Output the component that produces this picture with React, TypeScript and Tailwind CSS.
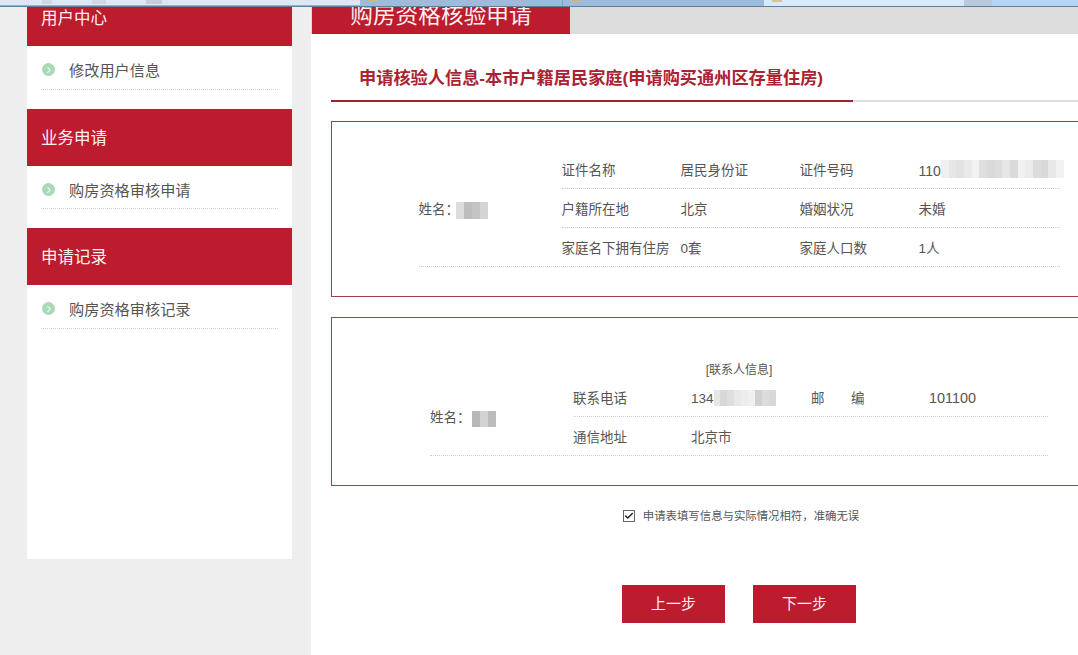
import { Check, ChevronRight } from "lucide-react";

const sideGroups = [
  { title: "用户中心", item: "修改用户信息", size: "h-[44px] mb-[19px]" },
  { title: "业务申请", item: "购房资格审核申请", size: "h-[43px] mb-[19px]" },
  { title: "申请记录", item: "购房资格审核记录", size: "h-[44px]" },
];

const idMosaic = [
  "bg-[#efefef]", "bg-[#e6e6e6]", "bg-[#e2e2e2]", "bg-[#e9e9e9]", "bg-[#f2f2f2]", "bg-[#dedede]",
  "bg-[#d9d9d9]", "bg-[#dcdcdc]", "bg-[#e6e6e6]", "bg-[#dadada]", "bg-[#f0f0f0]", "bg-[#ebebeb]",
  "bg-[#dcdcdc]", "bg-[#d8d8d8]", "bg-[#e8e8e8]", "bg-[#f2f2f2]",
];
const phoneMosaic = [
  "bg-[#e6e6e6]", "bg-[#d8d8d8]", "bg-[#dedede]", "bg-[#e8e8e8]", "bg-[#ececec]",
  "bg-[#f0f0f0]", "bg-[#d0d0d0]", "bg-[#dcdcdc]", "bg-[#d8d8d8]",
];
const name1Mosaic = ["bg-[#dcdcdc]", "bg-[#bdbdbd]", "bg-[#c4c4c4]", "bg-[#d4d4d4]"];
const name2Mosaic = ["bg-[#b8b8b8]", "bg-[#d2d2d2]", "bg-[#bcbcbc]"];

function Mosaic({ cells, className }: { cells: string[]; className: string }) {
  return (
    <span className={`flex shrink-0 ${className}`}>
      {cells.map((c, i) => (
        <span key={i} className={`h-full flex-1 ${c}`} />
      ))}
    </span>
  );
}

function SideGroup({ title, item, size }: { title: string; item: string; size: string }) {
  return (
    <div>
      <div className="flex h-[57px] items-center bg-[#bc1c2e] px-[14px] pt-[1px] text-[16.5px] text-[#fdf0f0]">{title}</div>
      <div className={`mx-[14px] flex border-b border-dotted border-[#d4d4d4] pt-[17px] ${size}`}>
        <span className="ml-px flex size-[13px] items-center justify-center rounded-full bg-[#a9d9b6]">
          <ChevronRight size={10} strokeWidth={3} className="text-[#e4f4e8]" />
        </span>
        <span className="ml-[14px] -mt-[2px] text-[15.2px] leading-[20px] text-[#555]">{item}</span>
      </div>
    </div>
  );
}

export default function App() {
  return (
    <div
      className="h-[655px] w-[1078px] overflow-hidden bg-[#eeeeee]"
      style={{ fontFamily: '"Liberation Sans", "Noto Sans CJK SC", sans-serif' }}
    >
      {/* browser chrome peeking in at the top */}
      <div className="relative z-10 flex h-[7px] border-b border-[#5f7f98]">
        <div className="flex w-[360px] gap-[40px] border-b border-[#8fb4d8] bg-[#dbe8f4] pl-[42px]">
          <div className="h-[4px] w-[10px] bg-[#d0d8e0]" />
          <div className="h-[4px] w-[14px] bg-[#d0d8e0]" />
          <div className="h-[4px] w-[16px] bg-[#c4ced8]" />
        </div>
        <div className="w-[203px] border-r border-[#7f9fbf] bg-[#9dbcdc] pl-[8px]">
          <div className="h-[2px] w-[10px] bg-[#c9b98a]" />
        </div>
        <div className="w-[201px] bg-[#9dbcdc] pl-[8px]">
          <div className="h-[2px] w-[10px] bg-[#c9b98a]" />
        </div>
        <div className="w-[200px] bg-[#d8e9f8] pl-[8px]">
          <div className="h-[2px] w-[10px] bg-[#d9c48a]" />
        </div>
        <div className="w-[28px] bg-[#b9c9d9]" />
        <div className="flex-1 bg-[#b4d6f5]" />
      </div>

      <div className="flex">
        {/* sidebar */}
        <aside className="ml-[27px] -mt-[18px] h-[570px] w-[265px] shrink-0 bg-white">
          {sideGroups.map((g) => (
            <SideGroup key={g.title} title={g.title} item={g.item} size={g.size} />
          ))}
        </aside>

        {/* main column runs past the window edge */}
        <main className="ml-[19px] -mt-[13px] h-[661px] w-[856px] shrink-0 bg-white">
          <div className="h-[40px] bg-[#dcdcdc] pl-px">
            <div className="flex h-[40px] w-[258px] items-center justify-center bg-[#bc1c2e] pt-[2px] text-[22.7px] text-[#fdf0f0]">
              购房资格核验申请
            </div>
          </div>

          <div className="mx-5">
            <div className="mt-[31px] h-[37px] border-b-2 border-[#dddddd]">
              <div className="h-[37px] w-[522px] whitespace-nowrap border-b-2 border-[#a8202f] pl-[28px] pt-[1px] text-[17.2px] font-bold leading-[24px] text-[#ab2233]">
                申请核验人信息-本市户籍居民家庭(申请购买通州区存量住房)
              </div>
            </div>

            {/* applicant */}
            <section className="mt-[19px] border border-[#a83a4a] pb-[29px] pt-7 text-[13.5px] text-[#555]">
              <div className="mx-auto flex w-[641px] border-b border-dotted border-[#cccccc]">
                <div className="flex w-[143px] shrink-0 items-center pt-1">
                  姓名：
                  <Mosaic cells={name1Mosaic} className="h-[17px] w-[32px] -ml-[3px]" />
                </div>
                <div className="min-w-0 flex-1">
                  <div className="flex h-[39px] items-center border-b border-dotted border-[#cccccc] pt-1">
                    <span className="w-[119px] shrink-0">证件名称</span>
                    <span className="w-[119px] shrink-0">居民身份证</span>
                    <span className="w-[119px] shrink-0">证件号码</span>
                    <span className="flex shrink-0 items-center text-[14px]">
                      110
                      <Mosaic cells={idMosaic} className="-mt-1 h-[18px] w-[123px]" />
                    </span>
                  </div>
                  <div className="flex h-[39px] items-center border-b border-dotted border-[#cccccc] pt-1">
                    <span className="w-[119px]">户籍所在地</span>
                    <span className="w-[119px]">北京</span>
                    <span className="w-[119px]">婚姻状况</span>
                    <span>未婚</span>
                  </div>
                  <div className="flex h-[38px] items-center pt-1">
                    <span className="w-[119px]">家庭名下拥有住房</span>
                    <span className="w-[119px]">0套</span>
                    <span className="w-[119px]">家庭人口数</span>
                    <span>1人</span>
                  </div>
                </div>
              </div>
            </section>

            {/* contact */}
            <section className="mt-[20px] border border-[#a83a4a] pb-[29px] pt-[42px] text-[13.5px] text-[#555]">
              <div className="h-[18px] pt-px text-center text-[12px] leading-[18px]">[联系人信息]</div>
              <div className="mx-auto flex w-[618px] border-b border-dotted border-[#cccccc]">
                <div className="flex w-[143px] shrink-0 items-center pt-1">
                  姓名：
                  <Mosaic cells={name2Mosaic} className="h-[16px] w-[24px] ml-[1px]" />
                </div>
                <div className="min-w-0 flex-1">
                  <div className="flex h-[39px] items-center border-b border-dotted border-[#cccccc] pt-1">
                    <span className="w-[118px]">联系电话</span>
                    <span className="flex w-[120px] items-center">
                      134
                      <Mosaic cells={phoneMosaic} className="-mt-[2px] h-[16px] w-[62px]" />
                    </span>
                    <span className="flex w-[118px]">
                      <span className="w-[40px]">邮</span>
                      <span>编</span>
                    </span>
                    <span className="text-[14.4px]">101100</span>
                  </div>
                  <div className="flex h-[38px] items-center pt-1">
                    <span className="w-[118px]">通信地址</span>
                    <span>北京市</span>
                  </div>
                </div>
              </div>
            </section>

            <label className="mt-[23px] flex items-center justify-center pl-[4px] text-[11.4px] leading-[14px] text-[#555]">
              <span className="mr-[8px] flex size-[12px] items-center justify-center border border-[#666] bg-white">
                <Check size={10} strokeWidth={3.5} className="text-[#222]" />
              </span>
              申请表填写信息与实际情况相符，准确无误
            </label>

            <div className="mt-[62px] flex justify-center gap-[28px]">
              <button type="button" className="h-[38px] w-[103px] bg-[#bc1c2e] text-[15px] text-[#fdf0f0]">
                上一步
              </button>
              <button type="button" className="h-[38px] w-[103px] bg-[#bc1c2e] text-[15px] text-[#fdf0f0]">
                下一步
              </button>
            </div>
          </div>
        </main>
      </div>
    </div>
  );
}
